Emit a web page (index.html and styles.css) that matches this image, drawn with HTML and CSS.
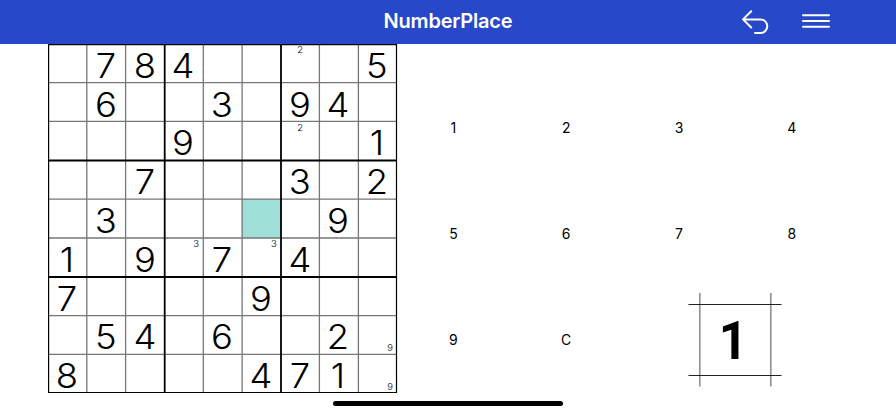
FILE: index.html
```html
<!DOCTYPE html>
<html lang="en">
<head>
<meta charset="utf-8">
<title>NumberPlace</title>
<link rel="stylesheet" href="styles.css">
</head>
<body>
<header class="bar">
  <h1 class="title">NumberPlace</h1>
  <nav class="actions">
    <svg class="icon-undo" width="28" height="28" viewBox="0 0 28 28"><path d="M10.2 3.2 2 11.4l8.2 8.1M2.4 11.4h17.1a6.8 6.8 0 0 1 0 13.6H14"/></svg>
    <svg class="icon-menu" width="28" height="16" viewBox="0 0 28 16"><path d="M1 2.2h26M1 8h26M1 13.8h26"/></svg>
  </nav>
</header>
<main class="game">
  <section class="board">
    <div class="cells">
      <b></b><b>7</b><b>8</b><b>4</b><b></b><b></b><b class="memo top">2</b><b></b><b>5</b>
      <b></b><b>6</b><b></b><b></b><b>3</b><b></b><b>9</b><b>4</b><b></b>
      <b></b><b></b><b></b><b>9</b><b></b><b></b><b class="memo top">2</b><b></b><b>1</b>
      <b></b><b></b><b>7</b><b></b><b></b><b></b><b>3</b><b></b><b>2</b>
      <b></b><b>3</b><b></b><b></b><b></b><b class="selected"></b><b></b><b>9</b><b></b>
      <b>1</b><b></b><b>9</b><b class="memo top right">3</b><b>7</b><b class="memo top right">3</b><b>4</b><b></b><b></b>
      <b>7</b><b></b><b></b><b></b><b></b><b>9</b><b></b><b></b><b></b>
      <b></b><b>5</b><b>4</b><b></b><b>6</b><b></b><b></b><b>2</b><b class="memo bottom right">9</b>
      <b>8</b><b></b><b></b><b></b><b></b><b>4</b><b>7</b><b>1</b><b class="memo bottom right">9</b>
    </div>
    <svg class="rules" width="350" height="350" viewBox="0 0 350 350">
      <path class="thin" d="M38.8 0v349M77.6 0v349M155.3 0v349M194.1 0v349M271.4 0v349M310.4 0v349M0 38.6h349M0 77.4h349M0 155.2h349M0 194h349M0 271.6h349M0 310.4h349"/>
      <path class="thick" d="M116.7 0v349M233 0v349M0 116.5h349M0 233h349"/>
      <path class="frame" d="M.6.6h347.9v347.9H.6z"/>
    </svg>
  </section>
  <section class="keypad">
    <span>1</span><span>2</span><span>3</span><span>4</span>
    <span>5</span><span>6</span><span>7</span><span>8</span>
    <span>9</span><span>C</span>
    <div class="stamp">
      <svg width="94" height="94" viewBox="0 0 94 94">
        <path class="vertical" d="M11.8 0v93.5M82.8 0v93.5"/>
        <path class="horizontal" d="M.5 11.5h93M.5 82.5h93"/>
        <text class="one" transform="translate(45.2 65.7) scale(.95 1)" text-anchor="middle">1</text>
      </svg>
    </div>
  </section>
</main>
<div class="home"></div>
</body>
</html>
```

FILE: styles.css
```css
* { box-sizing: border-box; }
body {
  margin: 0;
  width: 896px;
  height: 414px;
  overflow: hidden;
  position: relative;
  background: #fff;
  color: #000;
  font-family: Inter, "Liberation Sans", sans-serif;
}
.bar {
  height: 44px;
  background: #2648c9;
  display: grid;
  grid-template-columns: 1fr auto 1fr;
  align-items: center;
}
.title {
  grid-column: 2;
  margin: 0;
  padding-bottom: 3px;
  color: #fff;
  font-size: 20px;
  font-weight: 600;
  line-height: 24px;
  letter-spacing: -0.2px;
}
.actions {
  display: flex;
  align-items: center;
  justify-content: flex-end;
  gap: 33px;
  padding-right: 66px;
}
.actions svg { fill: none; stroke: #fff; stroke-width: 2; stroke-linecap: round; stroke-linejoin: round; }
.icon-menu { margin-top: -3px; }
.game { display: flex; padding-left: 48px; }
.board { position: relative; width: 350px; height: 350px; }
.cells {
  width: 349px;
  height: 349px;
  display: grid;
  grid-template: repeat(9, 1fr) / repeat(9, 1fr);
}
.cells b {
  display: flex;
  align-items: center;
  justify-content: center;
  min-width: 0;
  min-height: 0;
  padding: 5px 1px 0 0;
  font-size: 34px;
  font-weight: 340;
  font-optical-sizing: none;
  line-height: 30px;
  transform: scaleX(1.07);
}
.cells .memo {
  padding: 2px 3px;
  font-size: 9.5px;
  line-height: 8px;
  transform: none;
}
.cells .top { align-items: flex-start; }
.cells .bottom { align-items: flex-end; }
.cells .right { justify-content: flex-end; padding-right: 4px; }
.cells .selected { background: #a0dfd8; transform: none; }
.rules { position: absolute; left: 0; top: 0; fill: none; }
.thin { stroke: #777; stroke-width: 1.3; }
.thick { stroke: #000; stroke-width: 1.8; }
.frame { stroke: #000; stroke-width: 1.2; }
.keypad {
  display: grid;
  grid-template-columns: repeat(4, 112.8px);
  grid-template-rows: repeat(3, 106px);
  margin-left: -1px;
  padding-top: 31px;
  font-size: 14px;
  font-weight: 380;
}
.keypad span { display: flex; align-items: center; justify-content: center; padding-bottom: 2px; }
.stamp { grid-column: 3 / 5; padding: 6px 0 0 65px; }
.stamp .vertical { stroke: #949494; stroke-width: 1.7; }
.stamp .horizontal { stroke: #222; stroke-width: 1; }
.one { font: 700 53px Roboto, sans-serif; }
.home {
  position: absolute;
  left: 333px;
  top: 401px;
  width: 230px;
  height: 5px;
  border-radius: 3px;
  background: #000;
}
```
